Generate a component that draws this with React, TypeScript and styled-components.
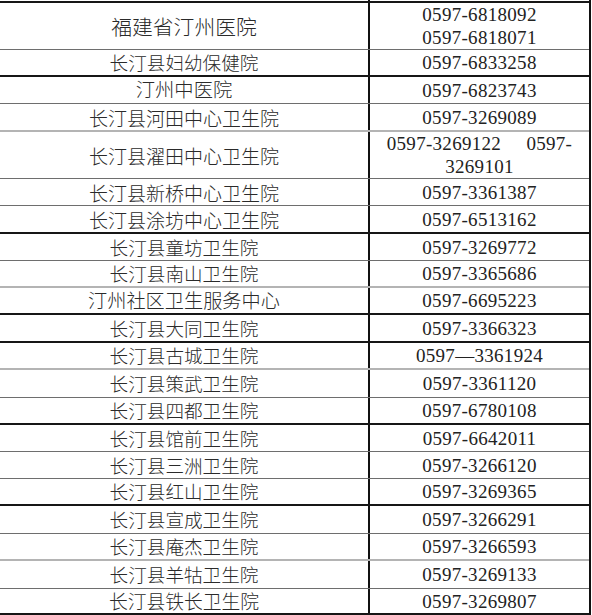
import React from 'react';
import styled, { createGlobalStyle } from 'styled-components';

const GlobalStyle = createGlobalStyle`
  html, body {
    margin: 0;
    padding: 0;
    background: #ffffff;
  }
`;

type LineKind = 'dark' | 'gray' | 'light';

const lineColors: Record<LineKind, string> = {
  dark: '#161616',
  gray: '#6e6e6e',
  light: '#b4b4b4',
};

const lineWidths: Record<LineKind, number> = {
  dark: 2,
  gray: 1,
  light: 2,
};

interface Clinic {
  name: string;
  phones: string[];
  height: number;
  size: number;
  line: LineKind;
}

const clinics: Clinic[] = [
  { name: '福建省汀州医院', phones: ['0597-6818092', '0597-6818071'], height: 47, size: 20.8, line: 'gray' },
  { name: '长汀县妇幼保健院', phones: ['0597-6833258'], height: 27, size: 18.6, line: 'dark' },
  { name: '汀州中医院', phones: ['0597-6823743'], height: 27, size: 19.3, line: 'gray' },
  { name: '长汀县河田中心卫生院', phones: ['0597-3269089'], height: 28, size: 19, line: 'light' },
  { name: '长汀县濯田中心卫生院', phones: ['0597-3269122     0597-', '3269101'], height: 47, size: 19, line: 'gray' },
  { name: '长汀县新桥中心卫生院', phones: ['0597-3361387'], height: 27, size: 19, line: 'gray' },
  { name: '长汀县涂坊中心卫生院', phones: ['0597-6513162'], height: 28, size: 19, line: 'dark' },
  { name: '长汀县童坊卫生院', phones: ['0597-3269772'], height: 27, size: 18.6, line: 'gray' },
  { name: '长汀县南山卫生院', phones: ['0597-3365686'], height: 27, size: 18.6, line: 'light' },
  { name: '汀州社区卫生服务中心', phones: ['0597-6695223'], height: 27, size: 19.2, line: 'dark' },
  { name: '长汀县大同卫生院', phones: ['0597-3366323'], height: 28, size: 18.6, line: 'dark' },
  { name: '长汀县古城卫生院', phones: ['0597—3361924'], height: 27, size: 18.6, line: 'light' },
  { name: '长汀县策武卫生院', phones: ['0597-3361120'], height: 28, size: 18.6, line: 'gray' },
  { name: '长汀县四都卫生院', phones: ['0597-6780108'], height: 27, size: 18.6, line: 'dark' },
  { name: '长汀县馆前卫生院', phones: ['0597-6642011'], height: 27, size: 18.6, line: 'gray' },
  { name: '长汀县三洲卫生院', phones: ['0597-3266120'], height: 27, size: 18.6, line: 'gray' },
  { name: '长汀县红山卫生院', phones: ['0597-3269365'], height: 27, size: 18.6, line: 'dark' },
  { name: '长汀县宣成卫生院', phones: ['0597-3266291'], height: 28, size: 18.6, line: 'gray' },
  { name: '长汀县庵杰卫生院', phones: ['0597-3266593'], height: 27, size: 18.6, line: 'light' },
  { name: '长汀县羊牯卫生院', phones: ['0597-3269133'], height: 28, size: 18.6, line: 'gray' },
  { name: '长汀县铁长卫生院', phones: ['0597-3269807'], height: 26, size: 18.8, line: 'dark' },
];

const Page = styled.div`
  width: 592px;
  height: 615px;
  overflow: hidden;
  background: #ffffff;
`;

const Sheet = styled.div`
  width: 589px;
  border-right: 2px solid #111111;
  display: flex;
  flex-direction: column;
`;

const Row = styled.div<{ $height: number; $line: LineKind }>`
  box-sizing: border-box;
  height: ${(p) => p.$height}px;
  display: grid;
  grid-template-columns: 370px 1fr;
  border-bottom: ${(p) => lineWidths[p.$line]}px solid ${(p) => lineColors[p.$line]};
`;

const NameCell = styled.div<{ $size: number }>`
  border-right: 2px solid #111111;
  display: flex;
  align-items: center;
  justify-content: center;
  font-family: 'Noto Sans CJK SC', 'Noto Sans CJK JP', sans-serif;
  font-weight: 300;
  font-size: ${(p) => p.$size}px;
  line-height: 1;
  color: #2a2a2a;
  white-space: nowrap;
`;

const PhoneCell = styled.div`
  display: flex;
  flex-direction: column;
  align-items: center;
  justify-content: center;
  font-family: 'Liberation Serif', 'Times New Roman', serif;
  font-size: 19px;
  line-height: 23px;
  letter-spacing: 0.3px;
  color: #222222;
  white-space: pre;
`;

const App: React.FC = () => {
  return (
    <Page>
      <GlobalStyle />
      <Sheet>
        <Row $height={3} $line="dark">
          <NameCell $size={21} />
          <PhoneCell />
        </Row>
        {clinics.map((c) => (
          <Row key={c.name} $height={c.height} $line={c.line}>
            <NameCell $size={c.size}>{c.name}</NameCell>
            <PhoneCell>
              {c.phones.map((p) => (
                <span key={p}>{p}</span>
              ))}
            </PhoneCell>
          </Row>
        ))}
      </Sheet>
    </Page>
  );
};

export default App;
